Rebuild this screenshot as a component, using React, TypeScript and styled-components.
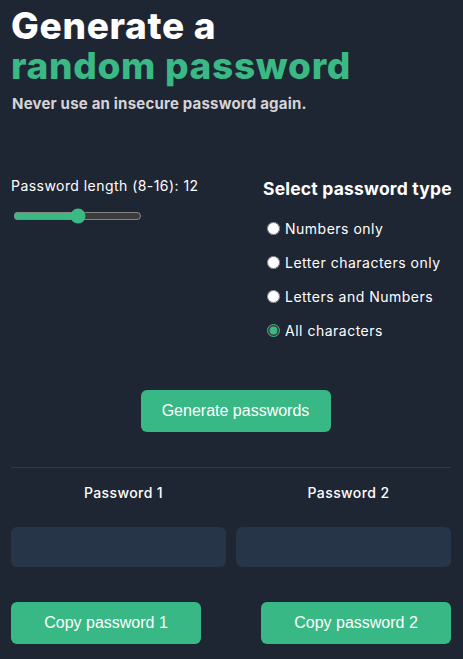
import React, { useState } from "react";
import styled, { createGlobalStyle } from "styled-components";

const Global = createGlobalStyle`
  html, body { margin: 0; padding: 0; background: #1f2633; }
  body { font-family: "Inter", "Noto Sans", sans-serif; color: #ffffff; }
  * { box-sizing: border-box; }
`;

const Page = styled.main`
  width: 463px;
  min-height: 659px;
  background: #1f2633;
  padding: 6px 12px 0 11px;
`;

const Title = styled.h1`
  margin: 0;
  font-size: 37px;
  line-height: 40px;
  font-weight: 800;
  letter-spacing: 0.7px;
  color: #ffffff;
`;

const Accent = styled.span`
  display: block;
  color: #3bb985;
`;

const Subtitle = styled.p`
  margin: 8px 0 0 1px;
  font-size: 15px;
  font-weight: 700;
  letter-spacing: 0.2px;
  color: #d5d4d8;
`;

const Options = styled.section`
  display: flex;
  justify-content: space-between;
  margin-top: 64px;
`;

const LengthBox = styled.div`
  display: flex;
  flex-direction: column;
  gap: 12px;
  padding-top: 0;
`;

const Label = styled.label`
  font-size: 14px;
  letter-spacing: 0.45px;
  color: #ffffff;
`;

const Range = styled.input`
  width: 129px;
  margin: 2px 0 0 2px;
  accent-color: #3bb985;
`;

const TypeBox = styled.div`
  display: flex;
  flex-direction: column;
  gap: 12px;
  width: 188px;
  padding-top: 1px;
`;

const TypeTitle = styled.h2`
  margin: 0 0 5px 0;
  font-size: 17.5px;
  line-height: 22px;
  font-weight: 700;
  letter-spacing: 0.2px;
  white-space: nowrap;
`;

const RadioRow = styled.label`
  display: flex;
  align-items: center;
  gap: 5px;
  font-size: 14px;
  letter-spacing: 0.5px;
  height: 22px;
  margin-left: 4px;
  white-space: nowrap;
`;

const Radio = styled.input`
  margin: 0;
  width: 13px;
  height: 13px;
  accent-color: #3bb985;
`;

const Center = styled.div`
  display: flex;
  justify-content: center;
  margin-top: 49px;
  padding-left: 9px;
`;

const Button = styled.button<{ $w: number }>`
  width: ${(p) => p.$w}px;
  height: 42px;
  border: none;
  border-radius: 6px;
  background: #38b884;
  color: #ffffff;
  font-family: "Liberation Sans", Arial, sans-serif;
  font-size: 16px;
`;

const Rule = styled.hr`
  border: none;
  border-top: 1px solid #2f3a4a;
  margin: 35px 0 0 0;
`;

const Labels = styled.div`
  display: grid;
  grid-template-columns: 1fr 1fr;
  margin-top: 16px;
  width: 450px;
`;

const ColLabel = styled.span`
  text-align: center;
  font-size: 14px;
  font-weight: 500;
  letter-spacing: 0.4px;
  line-height: 18px;
`;

const Boxes = styled.div`
  display: grid;
  grid-template-columns: 1fr 1fr;
  gap: 10px;
  margin-top: 25px;
`;

const Box = styled.div`
  height: 40px;
  border-radius: 6px;
  background: #273549;
`;

const CopyRow = styled.div`
  display: flex;
  justify-content: space-between;
  margin-top: 35px;
`;

export default function App() {
  const [len, setLen] = useState(12);
  const [type, setType] = useState("all");
  const types = [
    ["num", "Numbers only"],
    ["let", "Letter characters only"],
    ["ln", "Letters and Numbers"],
    ["all", "All characters"],
  ];
  return (
    <Page>
      <Global />
      <Title>
        Generate a<Accent>random password</Accent>
      </Title>
      <Subtitle>Never use an insecure password again.</Subtitle>
      <Options>
        <LengthBox>
          <Label htmlFor="len">Password length (8-16): {len}</Label>
          <Range
            id="len"
            type="range"
            min={8}
            max={16}
            value={len}
            onChange={(e) => setLen(Number(e.target.value))}
          />
        </LengthBox>
        <TypeBox role="radiogroup">
          <TypeTitle>Select password type</TypeTitle>
          {types.map(([k, t]) => (
            <RadioRow key={k}>
              <Radio
                type="radio"
                name="type"
                checked={type === k}
                onChange={() => setType(k)}
              />
              {t}
            </RadioRow>
          ))}
        </TypeBox>
      </Options>
      <Center>
        <Button $w={190}>Generate passwords</Button>
      </Center>
      <Rule />
      <Labels>
        <ColLabel>Password 1</ColLabel>
        <ColLabel>Password 2</ColLabel>
      </Labels>
      <Boxes>
        <Box />
        <Box />
      </Boxes>
      <CopyRow>
        <Button $w={190}>Copy password 1</Button>
        <Button $w={190}>Copy password 2</Button>
      </CopyRow>
    </Page>
  );
}
